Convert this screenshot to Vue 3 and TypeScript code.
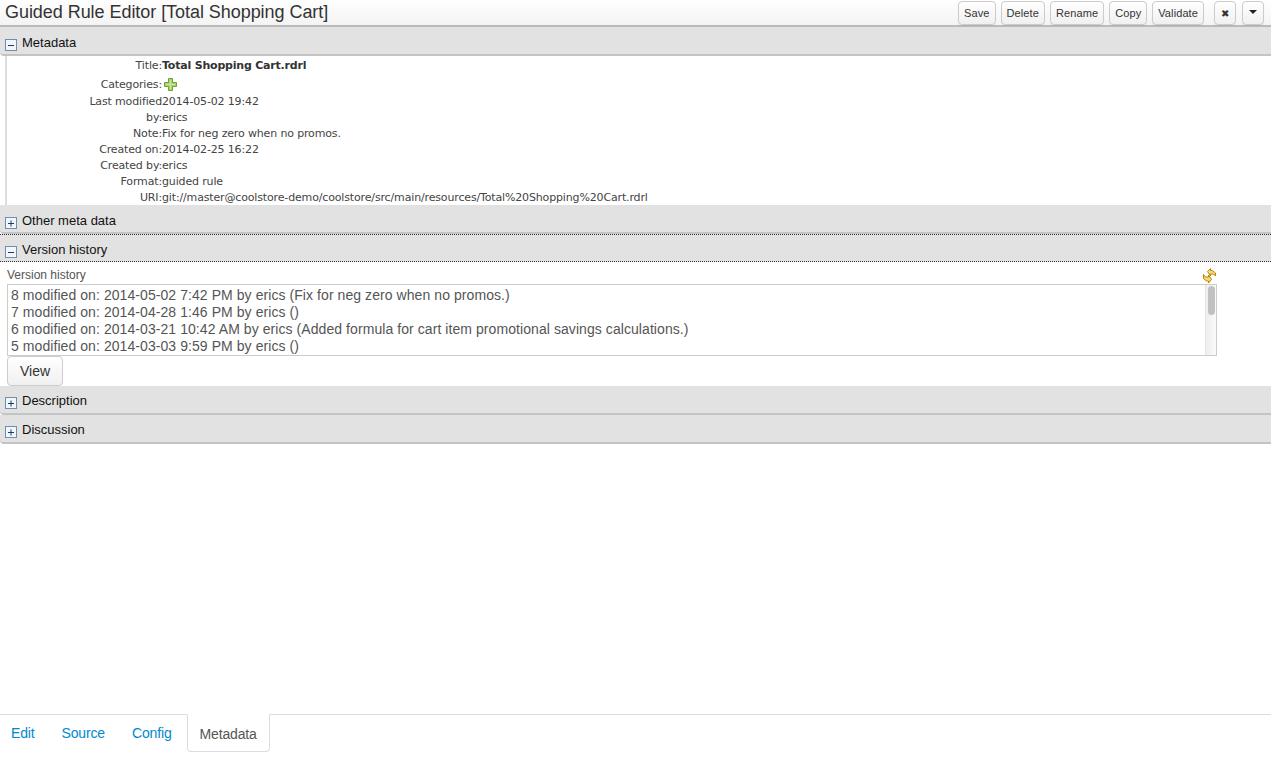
<script setup lang="ts">
const actions: string[] = ['Save', 'Delete', 'Rename', 'Copy', 'Validate']
const rows: { label: string; value: string }[] = [
  { label: 'Last modified', value: '2014-05-02 19:42' },
  { label: 'by:', value: 'erics' },
  { label: 'Note:', value: 'Fix for neg zero when no promos.' },
  { label: 'Created on:', value: '2014-02-25 16:22' },
  { label: 'Created by:', value: 'erics' },
  { label: 'Format:', value: 'guided rule' },
  { label: 'URI:', value: 'git://master@coolstore-demo/coolstore/src/main/resources/Total%20Shopping%20Cart.rdrl' },
]
const versions: string[] = [
  '8 modified on: 2014-05-02 7:42 PM by erics (Fix for neg zero when no promos.)',
  '7 modified on: 2014-04-28 1:46 PM by erics ()',
  '6 modified on: 2014-03-21 10:42 AM by erics (Added formula for cart item promotional savings calculations.)',
  '5 modified on: 2014-03-03 9:59 PM by erics ()',
]
</script>

<template>
  <div class="page">
    <header class="titlebar">
      <h1 class="title">Guided Rule Editor [Total Shopping Cart]</h1>
      <div class="actions">
        <button v-for="a in actions" :key="a" class="btn">{{ a }}</button>
        <button class="btn icon close-btn">✖</button>
        <button class="btn icon caret-btn"><span class="caret"></span></button>
      </div>
    </header>

    <section class="panel-head lower">
      <svg class="tree" width="12" height="12" viewBox="0 0 12 12"><rect x="0.5" y="0.5" width="11" height="11" fill="#f2f6fa" stroke="#6f8fb0"/><path d="M3 6.5h6" stroke="#123e70"/></svg>
      <span>Metadata</span>
    </section>
    <div class="meta">
      <div class="row first"><span class="lab">Title:</span><b class="val strong">Total Shopping Cart.rdrl</b></div>
      <div class="row cat">
        <span class="lab">Categories:</span>
        <svg class="plus" width="13" height="13" viewBox="0 0 13 13"><path d="M4.5 0.5h4v4h4v4h-4v4h-4v-4h-4v-4h4z" fill="#a9d468" stroke="#6d9f3a"/><path d="M6.5 2v9M2 6.5h9" stroke="#c9e79a"/></svg>
      </div>
      <div v-for="r in rows" :key="r.label" class="row"><span class="lab">{{ r.label }}</span><span class="val">{{ r.value }}</span></div>
    </div>

    <section class="panel-head lower">
      <svg class="tree" width="12" height="12" viewBox="0 0 12 12"><rect x="0.5" y="0.5" width="11" height="11" fill="#f2f6fa" stroke="#6f8fb0"/><path d="M3 6.5h6M6 3.5v6" stroke="#123e70"/></svg>
      <span>Other meta data</span>
    </section>
    <section class="panel-head focused">
      <svg class="tree" width="12" height="12" viewBox="0 0 12 12"><rect x="0.5" y="0.5" width="11" height="11" fill="#f2f6fa" stroke="#6f8fb0"/><path d="M3 6.5h6" stroke="#123e70"/></svg>
      <span>Version history</span>
    </section>

    <div class="history">
      <div class="hist-top">
        <span class="hist-label">Version history</span>
        <svg class="refresh" width="15" height="16" viewBox="0 0 15 16">
          <path d="M5.5 3.5l3-3v2h2l3 2.5v3l-2-2h-3v2z" fill="#f6d874" stroke="#b8860b" stroke-width="1"/>
          <path d="M9.5 11.5l-3 3.5v-2h-2l-3-2.5v-4l2 2.5h3V7z" fill="#f6d874" stroke="#b8860b" stroke-width="1"/>
        </svg>
      </div>
      <div class="listbox">
        <div class="list-items">
          <div v-for="v in versions" :key="v" class="item">{{ v }}</div>
        </div>
        <div class="scroll"><div class="thumb"></div></div>
      </div>
      <button class="view">View</button>
    </div>

    <section class="panel-head">
      <svg class="tree" width="12" height="12" viewBox="0 0 12 12"><rect x="0.5" y="0.5" width="11" height="11" fill="#f2f6fa" stroke="#6f8fb0"/><path d="M3 6.5h6M6 3.5v6" stroke="#123e70"/></svg>
      <span>Description</span>
    </section>
    <section class="panel-head">
      <svg class="tree" width="12" height="12" viewBox="0 0 12 12"><rect x="0.5" y="0.5" width="11" height="11" fill="#f2f6fa" stroke="#6f8fb0"/><path d="M3 6.5h6M6 3.5v6" stroke="#123e70"/></svg>
      <span>Discussion</span>
    </section>

    <div class="spacer"></div>

    <nav class="tabs">
      <a class="tab">Edit</a>
      <a class="tab">Source</a>
      <a class="tab">Config</a>
      <a class="tab active">Metadata</a>
    </nav>
  </div>
</template>

<style>
html, body { margin: 0; background: #fff; }
</style>

<style scoped>
.page {
  height: 760px;
  display: flex;
  flex-direction: column;
  font-family: "Liberation Sans", Arial, sans-serif;
  overflow: hidden;
  color: #333;
}
.titlebar {
  height: 27px;
  box-sizing: border-box;
  flex: none;
  display: flex;
  justify-content: space-between;
  align-items: flex-start;
  padding: 0 7px 0 5px;
  background: linear-gradient(#fff, #f3f3f3);
  border-bottom: 2px solid #bbb;
}
.title {
  margin: 0;
  font-size: 18px;
  font-weight: 400;
  line-height: 25px;
  letter-spacing: -0.05px;
  color: #333;
}
.actions { display: flex; padding-top: 1px; }
.btn {
  height: 24px;
  margin-left: 5px;
  padding: 0 5px;
  font: 11px "Liberation Sans", Arial, sans-serif;
  letter-spacing: 0.1px;
  color: #333;
  background: linear-gradient(#fff, #f0f0f0);
  border: 1px solid #ccc;
  border-radius: 4px;
  box-shadow: 0 1px 1px rgba(0,0,0,0.05);
}
.btn.icon { width: 22px; padding: 0; font-size: 10px; }
.close-btn { margin-left: 10px; }
.btn.caret-btn { margin-left: 6px; display: flex; justify-content: center; align-items: flex-start; padding-top: 8px; box-sizing: border-box; }
.caret {
  width: 0; height: 0;
  border-left: 4px solid transparent;
  border-right: 4px solid transparent;
  border-top: 4px solid #222;
}
.panel-head {
  height: 29px;
  box-sizing: border-box;
  flex: none;
  display: flex;
  align-items: center;
  gap: 5px;
  padding: 2px 0 0 5px;
  font-size: 13px;
  color: #111;
  background: #e2e2e2;
  border-bottom: 2px solid #c4c4c4;
  border-radius: 0 0 0 4px;
}
.panel-head.lower { padding-top: 4px; }
.panel-head.focused {
  border-top: 1px dotted #333;
  border-bottom: 1px dotted #333;
  border-radius: 0;
  height: 28px;
  padding-top: 3px;
}
.tree { margin-top: 4px; }
.meta {
  margin-left: 5px;
  border-left: 2px solid #ddd;
  height: 149px;
  box-sizing: border-box;
  padding-top: 1px;
  flex: none;
  font-family: "DejaVu Sans", Verdana, sans-serif;
  font-size: 11px;
  letter-spacing: -0.15px;
  color: #444;
}
.row { display: flex; height: 16px; line-height: 16px; }
.row.first { height: 17px; line-height: 17px; }
.row.cat { height: 20px; line-height: 22px; align-items: flex-start; }
.lab { width: 155px; text-align: right; flex: none; white-space: nowrap; }
.val { white-space: nowrap; }
.strong { font-weight: 700; color: #333; letter-spacing: -0.2px; }
.plus { margin: 4px 0 0 2px; }
.history { height: 124px; flex: none; padding-left: 7px; box-sizing: border-box; }
.hist-top {
  width: 1210px;
  height: 22px;
  display: flex;
  justify-content: space-between;
  align-items: flex-start;
  padding-top: 6px;
  box-sizing: border-box;
  font-size: 12px;
  line-height: 14px;
  color: #555;
}
.listbox {
  width: 1210px;
  height: 72px;
  box-sizing: border-box;
  border: 1px solid #ccc;
  display: flex;
}
.list-items { flex: 1; padding: 2px 0 0 3px; overflow: hidden; }
.item { font-size: 14px; line-height: 17px; letter-spacing: 0.07px; color: #555; white-space: nowrap; }
.scroll {
  width: 11px;
  box-sizing: border-box;
  background: linear-gradient(90deg, #eee, #fafafa);
  border-left: 1px solid #e5e5e5;
  padding: 1px 0 0 2px;
}
.thumb { width: 7px; height: 29px; border-radius: 4px; background: #c1c1c1; }
.view {
  display: block;
  width: 56px;
  height: 30px;
  font: 14px "Liberation Sans", Arial, sans-serif;
  color: #333;
  background: linear-gradient(#fff, #f0f0f0);
  border: 1px solid #ccc;
  border-radius: 4px;
  padding: 0;
}
.spacer { flex: 1; }
.tabs {
  height: 45px;
  flex: none;
  display: flex;
  border-top: 1px solid #ddd;
  font-size: 14px;
  letter-spacing: -0.15px;
}
.tab {
  padding: 0 16px 0 11px;
  line-height: 37px;
  color: #0088cc;
}
.tab.active {
  color: #555;
  background: #fff;
  height: 36px;
  margin: -1px 0 0 -1px;
  padding: 0 12px 0 12px;
  line-height: 38px;
  border: 1px solid #ddd;
  border-top-color: #fff;
  border-radius: 0 0 4px 4px;
}
</style>
